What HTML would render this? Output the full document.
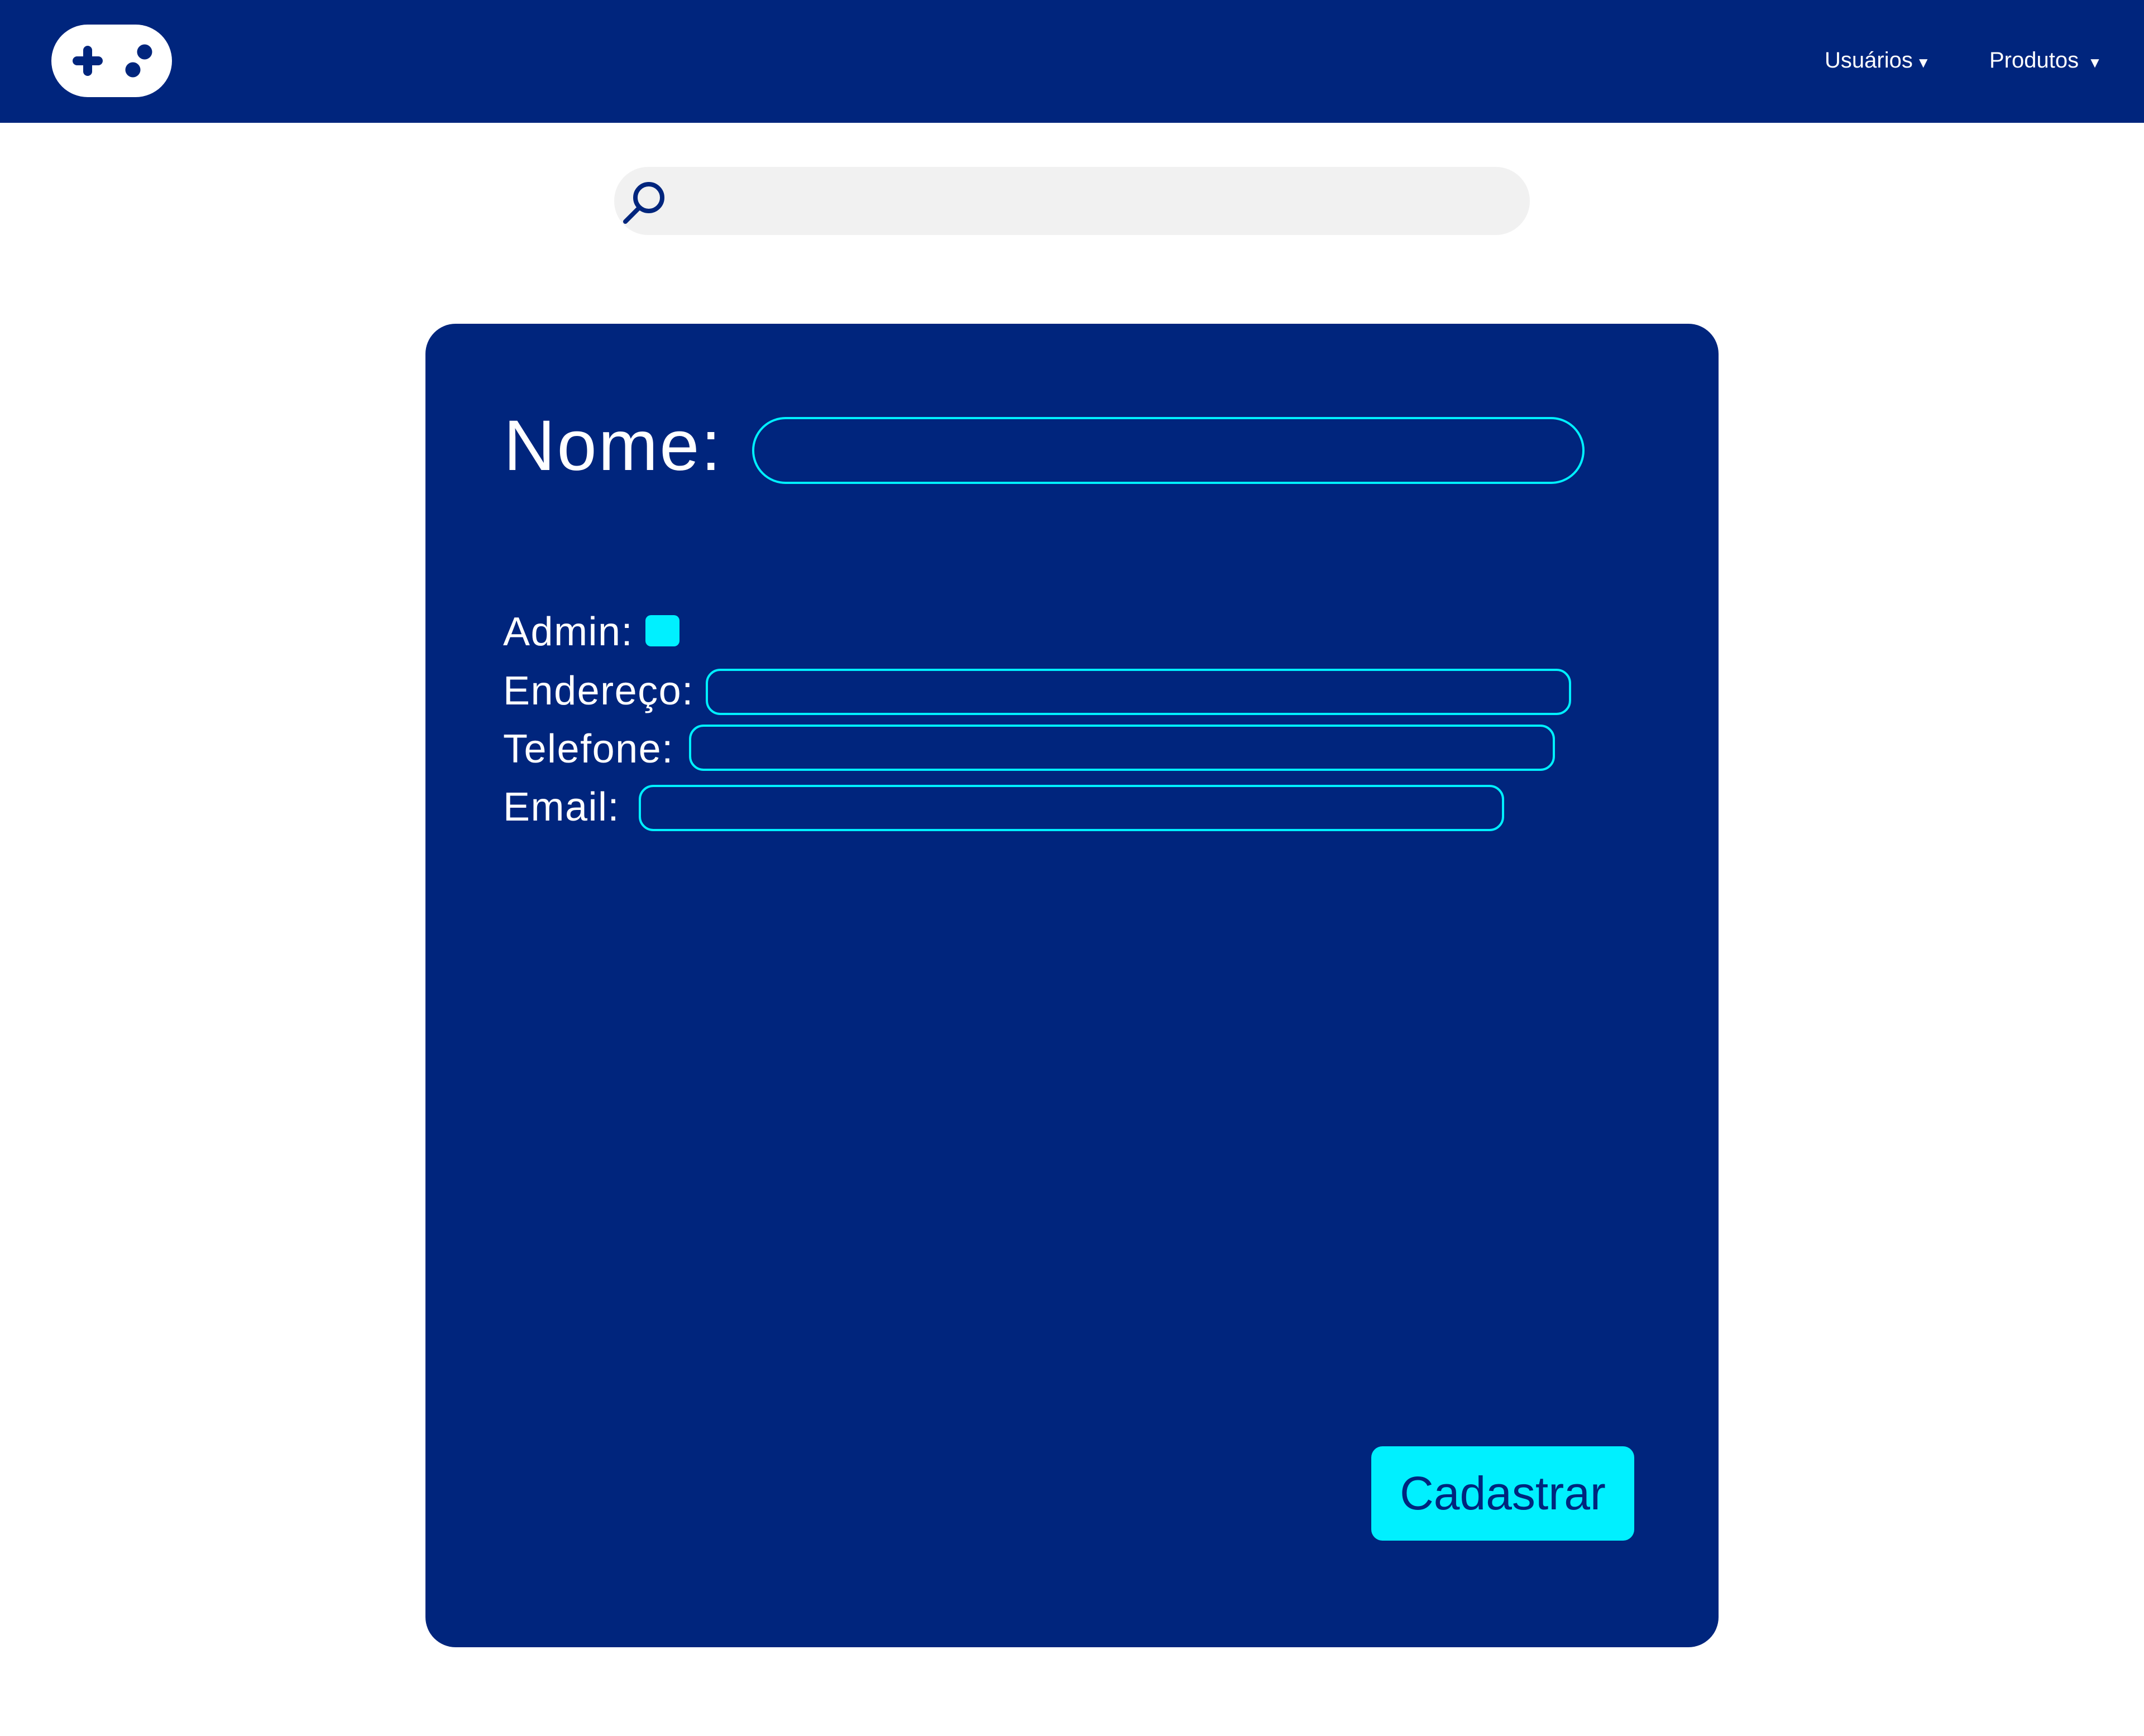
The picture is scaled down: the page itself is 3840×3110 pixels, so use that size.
<!DOCTYPE html>
<html><head><meta charset="utf-8"><style>
*{margin:0;padding:0;box-sizing:border-box}
body{width:3840px;height:3110px;background:#fff;position:relative;overflow:hidden;font-family:"Liberation Sans",sans-serif}
.a{position:absolute}
.hdr{left:0;top:0;width:3840px;height:220px;background:#00257d}
.nav{color:#fff;font-size:40px;top:84px;line-height:48px}
.card{left:762px;top:580px;width:2316px;height:2371px;background:#00257d;border-radius:54px}
.lbl{color:#fff;font-size:72px;line-height:84px;letter-spacing:1.5px}
.inp{border:4px solid #00f0ff;border-radius:26px}
</style></head><body>
<div class="a hdr"></div>
<svg class="a" style="left:92px;top:44px" width="217" height="131" viewBox="92 44 217 131">
<rect x="92" y="44" width="216" height="130" rx="65" fill="#fff"/>
<rect x="130" y="101" width="54" height="16" rx="8" fill="#00257d"/>
<rect x="149" y="82" width="16" height="54" rx="8" fill="#00257d"/>
<circle cx="259" cy="93" r="13.5" fill="#00257d"/>
<circle cx="238" cy="125" r="13.5" fill="#00257d"/>
</svg>
<div class="a nav" style="left:3268px">Usuários<span style="font-size:26px;margin-left:6px">▼</span></div>
<div class="a nav" style="left:3563px">Produtos<span style="font-size:26px;margin-left:16px">▼</span></div>
<div class="a" style="left:1100px;top:299px;width:1640px;height:122px;background:#f1f1f1;border-radius:61px"></div>
<svg class="a" style="left:1110px;top:320px" width="100" height="90" viewBox="0 0 100 90">
<circle cx="52" cy="34" r="24" fill="none" stroke="#00257d" stroke-width="8"/>
<line x1="35" y1="52" x2="10" y2="77" stroke="#00257d" stroke-width="8" stroke-linecap="round"/>
</svg>
<div class="a card"></div>
<div class="a lbl" style="left:902px;top:724px;font-size:128px;line-height:150px;letter-spacing:3px">Nome:</div>
<div class="a inp" style="left:1347px;top:747px;width:1491px;height:120px;border-radius:60px"></div>
<div class="a lbl" style="left:901px;top:1090px">Admin:</div>
<div class="a" style="left:1156px;top:1102px;width:61px;height:56px;background:#00f0ff;border-radius:10px"></div>
<div class="a lbl" style="left:901px;top:1196px">Endereço:</div>
<div class="a inp" style="left:1264px;top:1198px;width:1550px;height:83px"></div>
<div class="a lbl" style="left:901px;top:1300px">Telefone:</div>
<div class="a inp" style="left:1234px;top:1298px;width:1551px;height:83px"></div>
<div class="a lbl" style="left:901px;top:1404px">Email:</div>
<div class="a inp" style="left:1144px;top:1406px;width:1550px;height:83px"></div>
<div class="a" style="left:2456px;top:2591px;width:471px;height:169px;background:#00f0ff;border-radius:20px;color:#00257d;font-size:84px;line-height:169px;text-align:center">Cadastrar</div>
</body></html>
